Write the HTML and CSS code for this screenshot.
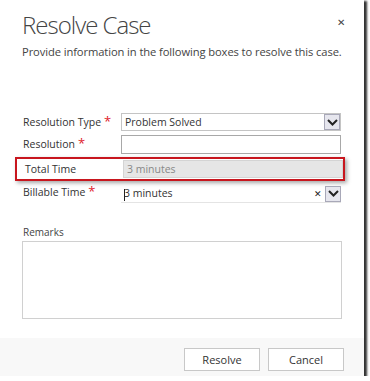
FILE: index.html
```html
<!DOCTYPE html>
<html lang="en">
<head>
  <meta charset="UTF-8">
  <title>Resolve Case</title>
  <link rel="stylesheet" href="styles.css">
</head>
<body>

  <div class="dialog">
    <div class="content">
      <div class="head">
        <h1>Resolve Case</h1>
        <span class="close">&#x2715;</span>
      </div>
      <p class="intro">Provide information in the following boxes to resolve this case.</p>

      <div class="fields">
        <div class="row">
          <label>Resolution Type<span class="req">*</span></label>
          <div class="box select">
            <span class="value">Problem Solved</span>
            <span class="drop"><svg width="11" height="7" viewBox="0 0 11 7"><path d="M1 1 L5.5 5.5 L10 1" fill="none" stroke="#222" stroke-width="2"/></svg></span>
          </div>
        </div>

        <div class="row">
          <label>Resolution<span class="req">*</span></label>
          <div class="box text"></div>
        </div>

        <div class="row highlight">
          <label>Total Time</label>
          <div class="box locked"><span class="value">3 minutes</span></div>
        </div>

        <div class="row">
          <label>Billable Time<span class="req">*</span></label>
          <div class="box billable">
            <span class="value"><span class="caret"></span>3 minutes</span>
            <span class="clear">&#x2715;</span>
            <span class="drop"><svg width="11" height="7" viewBox="0 0 11 7"><path d="M1 1 L5.5 5.5 L10 1" fill="none" stroke="#222" stroke-width="2"/></svg></span>
          </div>
        </div>
      </div>

      <div class="remarks">
        <label>Remarks</label>
        <div class="area"></div>
      </div>
    </div>

    <div class="footer">
      <button>Resolve</button>
      <button>Cancel</button>
    </div>
  </div>

</body>
</html>
```

FILE: styles.css
```css
body {
  margin: 0;
  background-color: #fff;
  font-family: "Open Sans", "Noto Sans", Arial, sans-serif;
  color: #333;
}

.dialog {
  width: 364px;
  height: 376px;
  background-color: #fff;
  display: flex;
  flex-direction: column;
  box-shadow: 2px 2px 2px 1px #333;
}

.content {
  flex: 1;
  padding: 0 22px 0 22px;
}

.head {
  display: flex;
  justify-content: space-between;
  align-items: center;
  height: 44px;
}

h1 {
  margin: 4px 0 0 0;
  font-weight: 300;
  font-size: 24px;
  color: #444;
  letter-spacing: -1px;
}

.close {
  font-size: 10px;
  color: #444;
  margin-right: -3px;
}

.intro {
  margin: 0;
  font-size: 11.2px;
  color: #444;
  letter-spacing: -0.1px;
  white-space: nowrap;
}

.fields {
  margin-top: 52px;
  display: flex;
  flex-direction: column;
}

.row {
  display: flex;
  align-items: center;
  height: 22px;
  font-size: 10.5px;
}

.row label {
  width: 98px;
  color: #333;
  padding-left: 1px;
}

.req {
  color: #e0202a;
  font-size: 13px;
  margin-left: 3px;
  line-height: 1;
}

.box {
  width: 220px;
  height: 18px;
  box-sizing: border-box;
  display: flex;
  align-items: center;
  font-size: 10.5px;
}

.box .value {
  flex: 1;
  padding-left: 3px;
}

.select {
  border: 1px solid #c4c4c4;
  height: 18px;
}

.drop {
  width: 16px;
  height: 16px;
  box-sizing: border-box;
  background-color: #e6e6ee;
  border: 1px solid #a8a8b8;
  display: flex;
  align-items: center;
  justify-content: center;
}

.text {
  border: 1px solid #a8a8a8;
  height: 19px;
}

.highlight {
  margin: 2px -3px 0 -7px;
  padding: 0 0 0 7px;
  height: 20px;
  border: 2px solid #c8161e;
  box-shadow: 2px 2px 4px rgba(0, 0, 0, 0.35);
}

.locked {
  background-color: #e6e6e6;
  border: 1px solid #d4d4d4;
  color: #888;
}

.billable {
  border-bottom: 1px solid #e4e4e4;
  height: 18px;
  margin-top: 4px;
}

.caret {
  display: inline-block;
  width: 1px;
  height: 12px;
  background-color: #222;
  vertical-align: middle;
  margin-right: -1px;
}

.clear {
  font-size: 9px;
  color: #222;
  margin-right: 3px;
}

.remarks {
  margin-top: 22px;
  font-size: 10px;
  color: #444;
}

.remarks label {
  display: block;
  padding-left: 1px;
  margin-bottom: 2px;
}

.area {
  height: 78px;
  width: 320px;
  box-sizing: border-box;
  border: 1px solid #d0d0d0;
}

.footer {
  height: 38px;
  background-color: #f8f8f8;
  display: flex;
  justify-content: flex-end;
  align-items: center;
  gap: 8px;
  padding-right: 20px;
}

.footer button {
  width: 76px;
  height: 23px;
  background-color: #fff;
  border: 1px solid #c8c8c8;
  font-family: "Open Sans", "Noto Sans", Arial, sans-serif;
  font-size: 11px;
  color: #333;
  padding: 0;
  margin-top: 4px;
}
```
